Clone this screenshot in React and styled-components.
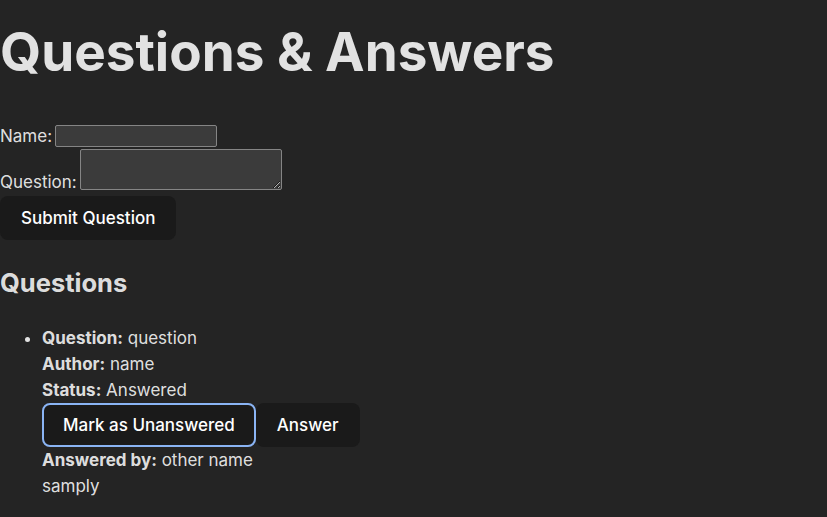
import React from 'react';
import styled, { createGlobalStyle } from 'styled-components';

const GlobalStyle = createGlobalStyle`
  body {
    margin: 0;
    background-color: #242424;
    color: rgba(255, 255, 255, 0.87);
    font-family: Inter, "Noto Sans", system-ui, sans-serif;
    font-size: 17px;
    line-height: 1.5;
    font-weight: 400;
    -webkit-font-smoothing: antialiased;
  }
`;

const Page = styled.div`
  display: flex;
  flex-direction: column;
  align-items: flex-start;
`;

const Title = styled.h1`
  font-size: 53px;
  line-height: 1.1;
  font-weight: 700;
  margin: 23px 0 42px;
`;

const Form = styled.form`
  display: flex;
  flex-direction: column;
  align-items: flex-start;
`;

const Field = styled.div`
  display: flex;
  align-items: ${(props) => (props.multiline ? 'flex-end' : 'center')};
  gap: 3px;
  line-height: 26px;
`;

const TextInput = styled.input`
  box-sizing: border-box;
  width: 162px;
  height: 22px;
  background: #3b3b3b;
  border: 1px solid #858585;
  border-radius: 2px;
  color: inherit;
  padding: 1px 2px;
`;

const TextArea = styled.textarea`
  box-sizing: border-box;
  width: 202px;
  height: 41px;
  background: #3b3b3b;
  border: 1px solid #858585;
  border-radius: 2px;
  color: inherit;
  margin-bottom: 5px;
`;

const Button = styled.button`
  border-radius: 8px;
  border: 2px solid ${(props) => (props.focused ? '#8ab4f4' : 'transparent')};
  padding: 0 19px;
  height: 44px;
  font-size: 1em;
  font-weight: 500;
  font-family: inherit;
  color: #fff;
  background-color: #1a1a1a;
  cursor: pointer;
  margin-top: ${(props) => props.top || 0}px;
`;

const Heading = styled.h2`
  font-size: 25.5px;
  line-height: 1.2;
  font-weight: 700;
  margin: 28px 0 0;
`;

const List = styled.ul`
  margin: 26px 0 0;
  padding-left: 42px;
  line-height: 26px;
`;

const Line = styled.div``;

const Actions = styled.div`
  display: flex;
`;

export default function App() {
  return (
    <Page>
      <GlobalStyle />
      <Title>Questions &amp; Answers</Title>
      <Form onSubmit={(e) => e.preventDefault()}>
        <Field>
          Name: <TextInput type="text" />
        </Field>
        <Field multiline>
          Question: <TextArea />
        </Field>
        <Button type="submit" top={1}>Submit Question</Button>
      </Form>
      <Heading>Questions</Heading>
      <List>
        <li>
          <Line>
            <strong>Question:</strong> question
          </Line>
          <Line>
            <strong>Author:</strong> name
          </Line>
          <Line>
            <strong>Status:</strong> Answered
          </Line>
          <Actions>
            <Button focused>Mark as Unanswered</Button>
            <Button>Answer</Button>
          </Actions>
          <Line>
            <strong>Answered by:</strong> other name
          </Line>
          <Line>samply</Line>
        </li>
      </List>
    </Page>
  );
}
